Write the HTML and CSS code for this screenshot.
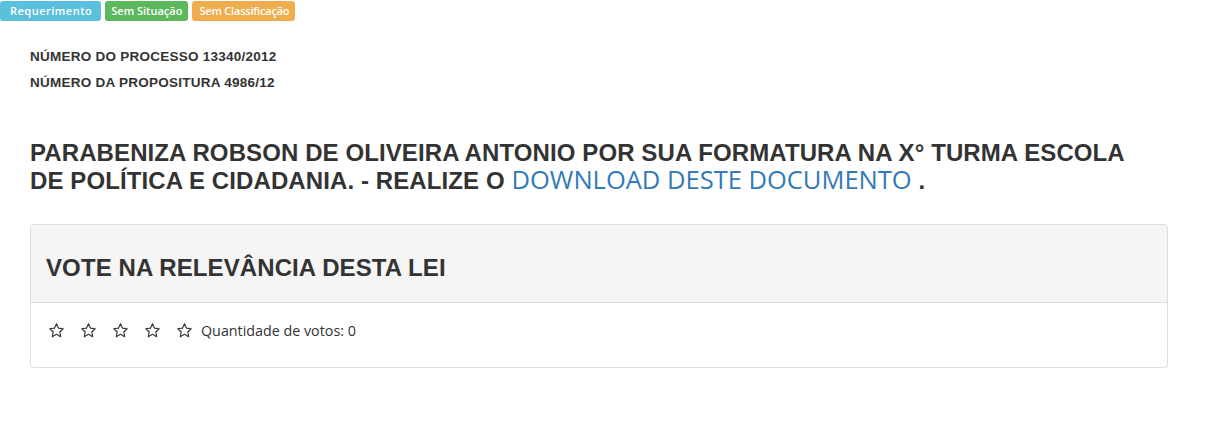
FILE: index.html
```html
<!DOCTYPE html>
<html lang="pt-BR">
<head>
<meta charset="utf-8">
<link rel="stylesheet" href="styles.css">
</head>
<body>
<div class="labels">
  <span class="label label-info">Requerimento</span>
  <span class="label label-success">Sem Situação</span>
  <span class="label label-warning">Sem Classificação</span>
</div>
<div class="content">
  <p class="meta">NÚMERO DO PROCESSO 13340/2012</p>
  <p class="meta">NÚMERO DA PROPOSITURA 4986/12</p>
  <h3 class="title">PARABENIZA ROBSON DE OLIVEIRA ANTONIO POR SUA FORMATURA NA X° TURMA ESCOLA DE POLÍTICA E CIDADANIA. - REALIZE O <a href="#" class="dl">DOWNLOAD DESTE DOCUMENTO</a> .</h3>
  <div class="panel">
    <div class="panel-heading"><h3>VOTE NA RELEVÂNCIA DESTA LEI</h3></div>
    <div class="panel-body">
      <div class="stars">
        <svg class="star" viewBox="0 0 24 24"><path d="M12 2.5l2.9 6.2 6.6.8-4.9 4.6 1.3 6.6L12 17.4l-5.9 3.3 1.3-6.6-4.9-4.6 6.6-.8z"/></svg>
        <svg class="star" viewBox="0 0 24 24"><path d="M12 2.5l2.9 6.2 6.6.8-4.9 4.6 1.3 6.6L12 17.4l-5.9 3.3 1.3-6.6-4.9-4.6 6.6-.8z"/></svg>
        <svg class="star" viewBox="0 0 24 24"><path d="M12 2.5l2.9 6.2 6.6.8-4.9 4.6 1.3 6.6L12 17.4l-5.9 3.3 1.3-6.6-4.9-4.6 6.6-.8z"/></svg>
        <svg class="star" viewBox="0 0 24 24"><path d="M12 2.5l2.9 6.2 6.6.8-4.9 4.6 1.3 6.6L12 17.4l-5.9 3.3 1.3-6.6-4.9-4.6 6.6-.8z"/></svg>
        <svg class="star" viewBox="0 0 24 24"><path d="M12 2.5l2.9 6.2 6.6.8-4.9 4.6 1.3 6.6L12 17.4l-5.9 3.3 1.3-6.6-4.9-4.6 6.6-.8z"/></svg>
      </div>
      <span class="votes">Quantidade de votos: 0</span>
    </div>
  </div>
</div>
</body>
</html>
```
FILE: styles.css
```css
* { box-sizing: border-box; }
html, body { margin: 0; padding: 0; background: #fff; }
body {
  font-family: "Open Sans", "Liberation Sans", sans-serif;
  color: #333;
  font-size: 13px;
}
.labels {
  display: flex;
  gap: 4px;
  padding-top: 1px;
}
.label {
  display: inline-block;
  height: 20px;
  line-height: 20px;
  padding: 0 6px;
  font-size: 11px;
  font-weight: 600;
  color: #fff;
  border-radius: 3px;
  white-space: nowrap;
}
.label-info {
  background: #5bc0de;
  padding: 0 9px 0 10px;
  letter-spacing: 0.5px;
}
.label-success { background: #5cb85c; }
.label-warning { background: #f0ad4e; letter-spacing: -0.2px; padding: 0 6px 0 7px; }
.content {
  padding: 0 50px 0 30px;
}
.meta {
  font-family: "Liberation Sans", Arial, sans-serif;
  font-weight: bold;
  font-size: 13.5px;
  letter-spacing: 0.25px;
  margin: 0;
  line-height: 26px;
  color: #333;
}
.meta:first-child { margin-top: 23px; }
.title {
  font-family: "Liberation Sans", Arial, sans-serif;
  font-weight: bold;
  font-size: 24px;
  line-height: 27px;
  letter-spacing: 0.1px;
  margin: 43px 0 30px;
  max-width: 1112px;
  color: #333;
}
.dl {
  font-family: "Open Sans", sans-serif;
  font-weight: normal;
  font-size: 25.5px;
  line-height: 27px;
  letter-spacing: 0;
  color: #337ab7;
  text-decoration: none;
}
.panel {
  border: 1px solid #ddd;
  border-radius: 4px;
  box-shadow: 0 1px 1px rgba(0,0,0,.05);
}
.panel-heading {
  background: #f5f5f5;
  border-bottom: 1px solid #ddd;
  border-radius: 3px 3px 0 0;
  height: 78px;
  display: flex;
  align-items: center;
  padding: 0 15px;
}
.panel-heading h3 {
  margin: 8px 0 0;
  font-family: "Liberation Sans", Arial, sans-serif;
  font-weight: bold;
  font-size: 24px;
  letter-spacing: 0.1px;
  color: #333;
}
.panel-body {
  height: 64px;
  display: flex;
  align-items: center;
  padding: 0 17px 9px;
  gap: 8px;
}
.stars {
  display: flex;
  gap: 15px;
  padding-bottom: 1px;
}
.star {
  width: 17px;
  height: 17px;
  fill: none;
  stroke: #333;
  stroke-width: 1.6;
  stroke-linejoin: round;
}
.votes { color: #333; font-size: 14.3px; }
```
